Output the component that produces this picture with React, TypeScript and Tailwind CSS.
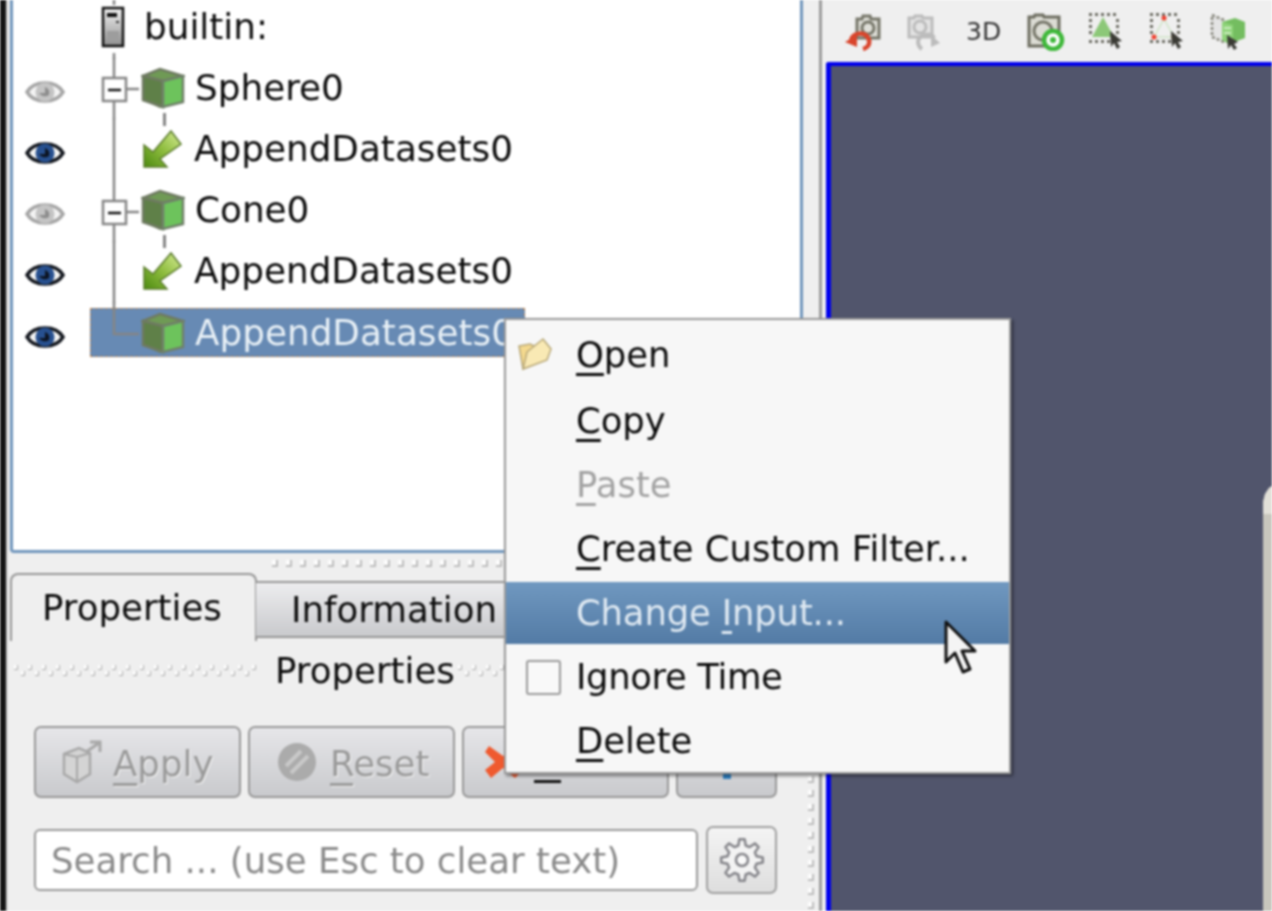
const FONT = "font-['DejaVu_Sans',sans-serif]"

function Eye({ on }: { on: boolean }) {
  const edge = on ? '#14181f' : '#a6a6a6'
  const iris = on ? '#27508f' : '#c4c4c4'
  const pupil = on ? '#0c1422' : '#8d8d8d'
  return (
    <svg width="40" height="28" viewBox="0 0 40 28" className="shrink-0">
      <path d="M2 14 C9 2 31 2 38 14 C31 26 9 26 2 14 Z" fill="#f4f4f4" stroke={edge} strokeWidth="3.5" />
      <circle cx="20" cy="14" r="9.5" fill={iris} />
      <path d="M20 9 v6 h-6 a7 7 0 0 0 10 2 a6 6 0 0 0 -4 -8 Z" fill={pupil} />
    </svg>
  )
}

function Cube() {
  return (
    <svg width="44" height="42" viewBox="0 0 44 42" className="shrink-0">
      <path d="M2 9 L19 2 L42 9 L42 35 L19 41 L2 33 Z" fill="#6c7f58" />
      <path d="M2 9 L19 2 L42 9 L22 14 Z" fill="#6f9a55" stroke="#6f7a62" strokeWidth="2.5" />
      <path d="M2 9 L22 14 L22 40 L2 33 Z" fill="#5f8048" stroke="#6f7a62" strokeWidth="2.5" />
      <path d="M22 14 L42 9 L42 35 L22 40 Z" fill="#6dc35c" stroke="#70806a" strokeWidth="2.5" />
    </svg>
  )
}

function AppendArrow() {
  return (
    <svg width="40" height="40" viewBox="0 0 40 40" className="shrink-0">
      <defs>
        <linearGradient id="arrowFill" x1="1" y1="0" x2="0" y2="1">
          <stop offset="0" stopColor="#d6ec96" />
          <stop offset="0.5" stopColor="#8fbd3f" />
          <stop offset="1" stopColor="#4c8a10" />
        </linearGradient>
      </defs>
      <path d="M1 16 L1 38 L24 38 L17 30 L38 15 L28 2 L10 23 Z" fill="url(#arrowFill)" stroke="#5c7d2e" strokeWidth="1.5" />
    </svg>
  )
}

// server glyph with the stubs of the tree line above and below it
function ServerIcon() {
  return (
    <svg width="24" height="61" viewBox="0 0 24 61" className="shrink-0 overflow-visible">
      <defs>
        <linearGradient id="serverFill" x1="0" y1="0" x2="0" y2="1">
          <stop offset="0" stopColor="#f1f1f1" />
          <stop offset="1" stopColor="#8f8f8f" />
        </linearGradient>
      </defs>
      <path d="M12 0 V9 M12 57 V63" stroke="#858585" strokeWidth="2.5" />
      <rect x="1" y="12" width="20" height="38" fill="url(#serverFill)" stroke="#111" strokeWidth="2.5" />
      <rect x="5" y="17" width="10" height="4" fill="#111" />
      <rect x="14" y="25" width="3" height="2" fill="#333" />
      <rect x="5" y="35" width="12" height="10" fill="#9d9d9d" />
    </svg>
  )
}

// tree gutter of one row, x 90..141 of the picture
function Branch({ kind }: { kind: 'open' | 'child' | 'last' }) {
  const height = 61
  const mid = 32
  return (
    <svg width="51" height={height} viewBox={`0 0 51 ${height}`} className="shrink-0 overflow-visible">
      {kind === 'open' && (
        <>
          <path d={`M24 0 V${height + 1} M36 ${mid} H49`} stroke="#858585" strokeWidth="2.5" />
          <rect x="13" y={mid - 11} width="23" height="23" fill="#fff" stroke="#858585" strokeWidth="2.5" />
          <path d={`M18 ${mid + 1} H31`} stroke="#111" strokeWidth="2.5" />
        </>
      )}
      {kind === 'child' && <path d={`M24 0 V${height + 1}`} stroke="#858585" strokeWidth="2.5" />}
      {kind === 'last' && <path d={`M24 0 V${mid} H49`} stroke="#858585" strokeWidth="2.5" fill="none" />}
    </svg>
  )
}

function TreeRow({ eye, kind, icon, label, selected }: {
  eye?: boolean
  kind?: 'open' | 'child' | 'last'
  icon: 'server' | 'cube' | 'arrow'
  label: string
  selected?: boolean
}) {
  return (
    <div className="flex h-[61.2px] shrink-0">
      <div className="w-[77px] shrink-0 flex items-center pl-[12px] pt-[8px]">
        {eye !== undefined && <Eye on={eye} />}
      </div>
      <div className="grid flex-1">
        {selected && (
          <div className="col-start-1 row-start-1 self-center w-[435px] h-[49px] bg-[#678ab4] border border-dashed border-[#b5804e]" />
        )}
        <div className="col-start-1 row-start-1 flex items-center">
          {kind ? <Branch kind={kind} /> : <div className="w-[12px] shrink-0" />}
          {icon === 'server' && <ServerIcon />}
          {icon === 'cube' && <Cube />}
          {icon === 'arrow' && (
            <div className="relative ml-[2px]">
              <AppendArrow />
              <div className="absolute left-[20px] -top-[16px] w-[2.5px] h-[13px] bg-[#858585]" />
            </div>
          )}
          <span className={`whitespace-nowrap ${icon === 'server' ? 'ml-[18px]' : icon === 'cube' ? 'ml-[10px]' : 'ml-[11px]'} ${selected ? 'text-[#e8f0f6]' : 'text-[#0c0c0c]'}`}>
            {label}
          </span>
        </div>
      </div>
    </div>
  )
}

function Grip({ count, className }: { count: number; className: string }) {
  return (
    <div className={`flex ${className}`}>
      {Array.from({ length: count }, (_, i) => (
        <span key={i} className="w-[6px] h-[7px] shrink-0 bg-[#fdfdfd] border-b-2 border-r-2 border-[#bdbdbd]" />
      ))}
    </div>
  )
}

function TitleGrip({ count, className }: { count: number; className: string }) {
  return (
    <div className={`flex h-[12px] gap-[3px] overflow-hidden ${className}`}>
      {Array.from({ length: count }, (_, i) => (
        <span key={i} className="w-[4px] h-[5px] shrink-0 bg-[#fdfdfd] border-b border-r border-[#adadad] even:mt-[6px]" />
      ))}
    </div>
  )
}

function PanelButton({ width, children, className = '' }: { width: string; children: React.ReactNode; className?: string }) {
  return (
    <div className={`${width} h-[72px] shrink-0 flex items-center rounded-[7px] border-2 border-[#989898] bg-gradient-to-b from-[#e6e6e9] to-[#c9cacd] ${className}`}>
      {children}
    </div>
  )
}

function MenuItem({ label, mnemonic, before = '', disabled, active, icon, className = '' }: {
  label: string
  mnemonic: string
  before?: string
  disabled?: boolean
  active?: boolean
  icon?: React.ReactNode
  className?: string
}) {
  const color = disabled ? 'text-[#a2a2a2]' : active ? 'text-[#dfe9f2]' : 'text-[#0b0b0b]'
  const bg = active ? 'bg-gradient-to-b from-[#7098c0] to-[#537ba5] h-[62px] my-[1px]' : 'h-[64px]'
  return (
    <div className={`flex items-center ${bg}`}>
      <div className="w-[70px] shrink-0 flex items-center">{icon}</div>
      <span className={`whitespace-nowrap ${color} ${className}`}>
        {before}
        {mnemonic && <span className="underline decoration-[3px] underline-offset-[6px] [text-decoration-skip-ink:none]">{mnemonic}</span>}
        {label}
      </span>
    </div>
  )
}

function Dots({ x, y, w, h, gap }: { x: number; y: number; w: number; h: number; gap: number }) {
  const cols = Math.floor(w / gap) + 1
  const rows = Math.floor(h / gap) + 1
  const dots = []
  for (let i = 0; i < cols; i++) {
    dots.push(<rect key={`t${i}`} x={x + i * gap} y={y} width="3" height="3" fill="#6b6b62" />)
    dots.push(<rect key={`b${i}`} x={x + i * gap} y={y + h} width="3" height="3" fill="#6b6b62" />)
  }
  for (let i = 1; i < rows - 1; i++) {
    dots.push(<rect key={`l${i}`} x={x} y={y + i * gap} width="3" height="3" fill="#6b6b62" />)
    dots.push(<rect key={`r${i}`} x={x + w} y={y + i * gap} width="3" height="3" fill="#6b6b62" />)
  }
  return <>{dots}</>
}

function CursorMark() {
  return <path d="M25 22 L26 38 L29 34 L32 40 L35 38 L32 33 L37 32 Z" fill="#3a3a34" />
}

function gearPath(cx: number, cy: number, outer: number, inner: number, teeth: number) {
  const pts: string[] = []
  for (let i = 0; i < teeth; i++) {
    const a = (i / teeth) * Math.PI * 2
    const s = (Math.PI * 2) / teeth
    const at = (r: number, t: number) => `${(cx + r * Math.cos(t)).toFixed(1)} ${(cy + r * Math.sin(t)).toFixed(1)}`
    pts.push(at(inner, a - s * 0.32), at(outer, a - s * 0.16), at(outer, a + s * 0.16), at(inner, a + s * 0.32))
  }
  return `M${pts.join(' L')} Z`
}

function Toolbar() {
  return (
    <div className="h-[62px] shrink-0 flex items-center pl-[20px]">
      {/* reset camera */}
      <svg width="40" height="40" viewBox="0 0 40 40" className="shrink-0">
        <path d="M15 8 H20 L21 5 H28 L29 8 H37 V27 H15 Z" fill="#dfdfd8" stroke="#77776a" strokeWidth="3" />
        <circle cx="26" cy="17" r="6" fill="none" stroke="#77776a" strokeWidth="3" />
        <path d="M9 29 C11 21 24 20 27 29 C28 34 25 37 21 38" fill="none" stroke="#d9452c" strokeWidth="4.5" />
        <path d="M3 31 L15 24 L15 36 Z" fill="#d9452c" />
      </svg>
      {/* redo camera, disabled */}
      <svg width="40" height="40" viewBox="0 0 40 40" className="shrink-0 ml-[22px]">
        <path d="M5 7 H10 L11 5 H18 L19 7 H28 V26 H5 Z" fill="#e4e4e4" stroke="#bcbcbc" strokeWidth="3" />
        <circle cx="16" cy="16" r="6" fill="none" stroke="#bcbcbc" strokeWidth="3" />
        <path d="M14 30 C16 22 28 22 30 27 M18 38 C15 36 14 33 14 30" fill="none" stroke="#bcbcbc" strokeWidth="4" />
        <path d="M36 32 L27 24 L27 36 Z" fill="#bcbcbc" />
      </svg>
      <span className="ml-[22px] w-[40px] text-[25px] text-[#333] leading-none">3D</span>
      {/* zoom to data */}
      <svg width="40" height="40" viewBox="0 0 40 40" className="shrink-0 ml-[20px]">
        <path d="M3 6 H8 L9 4 H17 L18 6 H33 V35 H3 Z" fill="#dcdcd4" stroke="#6d6d60" strokeWidth="3" />
        <circle cx="17" cy="20" r="9" fill="none" stroke="#77776a" strokeWidth="3" />
        <circle cx="27" cy="29" r="9" fill="#fff" stroke="#3fb83a" strokeWidth="4.5" />
        <circle cx="27" cy="29" r="3" fill="#3fb83a" />
      </svg>
      {/* select cells */}
      <svg width="44" height="44" viewBox="0 0 44 44" className="shrink-0 ml-[19px]">
        <Dots x={4} y={4} w={27} h={27} gap={6} />
        <path d="M18 8 L29 28 H7 Z" fill="#8cc878" />
        <CursorMark />
      </svg>
      {/* select points */}
      <svg width="44" height="44" viewBox="0 0 44 44" className="shrink-0 ml-[17px]">
        <Dots x={4} y={4} w={27} h={27} gap={6} />
        <path d="M18 10 L28 28 H8 Z" fill="none" stroke="#cfe4c6" strokeWidth="1.5" />
        <circle cx="18" cy="9" r="2.5" fill="#f04030" />
        <circle cx="8" cy="28" r="2.5" fill="#f04030" />
        <circle cx="28" cy="28" r="2.5" fill="#f04030" />
        <CursorMark />
      </svg>
      {/* interactive select */}
      <svg width="44" height="44" viewBox="0 0 44 44" className="shrink-0 ml-[17px]">
        <path d="M5 6 L17 11 V33 L5 28 Z" fill="#e4e4e4" stroke="#85857a" strokeWidth="2.5" strokeDasharray="3 2" />
        <path d="M15 13 L28 9 L38 13 V29 L22 35 L15 31 Z" fill="#74bd60" />
        <path d="M15 13 L26 16 V34 L15 31 Z" fill="#8fd47a" />
        <path d="M17 19 H24 M17 24 H24" stroke="#dff2d6" strokeWidth="1.5" />
        <path d="M20 26 L21 40 L24 36 L27 41 L30 39 L27 35 L31 33 Z" fill="#3a3a34" />
      </svg>
    </div>
  )
}

export default function App() {
  return (
    <div className={`relative flex w-[1272px] h-[911px] overflow-hidden bg-[#efefef] text-[35.6px] leading-none blur-[0.8px] ${FONT}`}>
      <div className="w-[6px] shrink-0 bg-[#141414]" />
      <div className="w-[2px] shrink-0 bg-[#d2d2d2]" />

      {/* left dock */}
      <div className="w-[811px] shrink-0 flex flex-col pl-[2px]">
        <div className="w-[793px] h-[553px] shrink-0 overflow-hidden flex flex-col bg-white border-x-[3px] border-b-[3px] border-[#7196bc] rounded-b-[4px] text-[35.8px]">
          <div className="flex flex-col -mt-[4px]">
            <TreeRow icon="server" label="builtin:" />
            <TreeRow eye={false} kind="open" icon="cube" label="Sphere0" />
            <TreeRow eye kind="child" icon="arrow" label="AppendDatasets0" />
            <TreeRow eye={false} kind="open" icon="cube" label="Cone0" />
            <TreeRow eye kind="child" icon="arrow" label="AppendDatasets0" />
            <TreeRow eye kind="last" icon="cube" label="AppendDatasets0" selected />
          </div>
        </div>

        <div className="flex flex-1 min-h-0">
          <div className="w-[793px] shrink-0 flex flex-col">
            <Grip count={17} className="h-[20px] items-center pl-[262px] gap-[8px]" />

            <div className="flex h-[68px] items-end shrink-0">
              <div className="w-[247px] h-[68px] shrink-0 pt-[15px] pl-[30px] rounded-t-[8px] border-t-2 border-x-2 border-[#969696] border-b-0 bg-[#efefef] text-[#0c0c0c]">
                Properties
              </div>
              <div className="w-[300px] h-[57px] mb-[3px] -ml-[1px] shrink-0 pt-[9px] pl-[35px] rounded-br-[8px] border-y-2 border-r-2 border-[#969696] bg-gradient-to-b from-[#ededef] to-[#c9cacd] text-[#0c0c0c]">
                Information
              </div>
            </div>

            <div className="h-[60px] shrink-0 flex items-center pl-[4px]">
              <TitleGrip count={35} className="w-[246px]" />
              <span className="ml-[15px] text-[#0c0c0c] whitespace-nowrap">Properties</span>
              <TitleGrip count={40} className="ml-[3px] w-[280px]" />
            </div>

            <div className="flex gap-[7px] pl-[24px] mt-[25px] shrink-0">
              <PanelButton width="w-[207px]" className="pl-[26px] text-[#9a9a9a]">
                <svg width="40" height="44" viewBox="0 0 40 44" className="shrink-0">
                  <path d="M2 14 L17 8 L28 13 V34 L15 42 L2 34 Z" fill="#d4d4d4" stroke="#a8a8a8" strokeWidth="2.5" />
                  <path d="M15 17 V42 M2 14 L15 17 L28 13" stroke="#a8a8a8" strokeWidth="2" fill="none" />
                  <path d="M24 12 L37 3 M28 2 H38 V12" stroke="#a8a8a8" strokeWidth="3" fill="none" />
                </svg>
                <span className="ml-[11px] mt-[3px] [text-shadow:1px_1px_0_#f4f4f4]">
                  <span className="underline decoration-[3px] underline-offset-[7px]">A</span>pply
                </span>
              </PanelButton>
              <PanelButton width="w-[207px]" className="pl-[27px] text-[#9a9a9a]">
                <svg width="40" height="40" viewBox="0 0 40 40" className="shrink-0">
                  <circle cx="20" cy="20" r="19" fill="#ababab" />
                  <path d="M9 24 L24 9 M14 31 L31 14" stroke="#c9c9c9" strokeWidth="4" />
                </svg>
                <span className="ml-[13px] mt-[3px] [text-shadow:1px_1px_0_#f4f4f4]">
                  <span className="underline decoration-[3px] underline-offset-[7px]">R</span>eset
                </span>
              </PanelButton>
              <PanelButton width="w-[207px]" className="pl-[19px]">
                <svg width="40" height="40" viewBox="0 0 40 40" className="shrink-0">
                  <path d="M6 4 L20 14 L34 4 L38 12 L28 20 L38 30 L32 36 L20 26 L8 36 L2 28 L12 20 L2 10 Z" fill="#ef5a2f" />
                </svg>
                {/* the label sits under the menu, only its mnemonic underline shows */}
                <span className="ml-[11px] mt-[39px] w-[27px] h-[3px] bg-[#111]" />
              </PanelButton>
              <PanelButton width="w-[101px]" className="justify-center h-[70px] pt-[28px]">
                <span className="w-[8px] h-[6px] bg-[#2f7fc0]" />
              </PanelButton>
            </div>

            <div className="flex items-center gap-[8px] pl-[24px] mt-[28px] shrink-0">
              <input
                readOnly
                placeholder="Search ... (use Esc to clear text)"
                className="w-[664px] h-[62px] px-[15px] rounded-[6px] border-2 border-[#989898] bg-white outline-none text-[#333] placeholder:text-[#8a8a8a]"
              />
              <div className="w-[71px] h-[68px] flex items-center justify-center rounded-[7px] border-2 border-[#a0a0a0] bg-gradient-to-b from-[#f4f4f4] to-[#dedede]">
                <svg width="46" height="46" viewBox="0 0 46 46">
                  <path d={gearPath(23, 23, 21, 15, 8)} fill="#f3f3f3" stroke="#85858a" strokeWidth="2.5" strokeLinejoin="round" />
                  <circle cx="23" cy="23" r="6" fill="#fafafa" stroke="#85858a" strokeWidth="2.5" />
                </svg>
              </div>
            </div>
          </div>

          {/* vertical dock grip */}
          <Grip count={24} className="flex-col w-[16px] pt-[27px] pl-[5px] gap-[7px] shrink-0" />
        </div>
      </div>

      {/* right side */}
      <div className="w-[3px] shrink-0 bg-[#9c9c9c]" />
      <div className="flex-1 flex flex-col min-w-0">
        <Toolbar />
        <div className="relative flex-1 ml-[4px] border-l-[5px] border-t-[4px] border-[#0000ee] rounded-tl-[3px] bg-[#51556c]">
          {/* edge of the rendered geometry */}
          <svg width="9" height="425" viewBox="0 0 9 425" className="absolute right-0 bottom-0">
            <path d="M0 16 L2 8 L6 2 L9 0 V425 H0 Z" fill="#c8c6bd" />
            <path d="M0 16 L2 8 L6 2 L9 0 V28 H0 Z" fill="#e2e0d8" />
          </svg>
        </div>
      </div>

      {/* context menu */}
      <div className="absolute left-[504px] top-[318px] w-[507px] h-[456px] pt-[5px] text-[35.4px] bg-[#f7f7f7] border-2 border-[#9a9a9a] shadow-[2px_2px_3px_rgba(0,0,0,0.45)]">
        <MenuItem
          mnemonic="O"
          label="pen"
          className="mb-[4px]"
          icon={
            <svg width="36" height="36" viewBox="0 0 36 36" className="ml-[11px] -mt-[6px]">
              <path d="M2 10 L13 8 L17 10 L27 7 L28 24 L6 33 Z" fill="#f4d98e" stroke="#b8a878" strokeWidth="1.5" />
              <path d="M10 16 L26 3 L34 13 L30 24 L6 33 Z" fill="#f9e9b4" stroke="#b8a878" strokeWidth="1.5" />
            </svg>
          }
        />
        <MenuItem mnemonic="C" label="opy" />
        <MenuItem mnemonic="P" label="aste" disabled />
        <MenuItem mnemonic="C" label="reate Custom Filter..." />
        <MenuItem before="Change " mnemonic="I" label="nput..." active className="tracking-[-0.15px]" />
        <MenuItem
          mnemonic=""
          label=""
          before="Ignore Time"
          className="tracking-[-0.35px]"
          icon={<span className="w-[35px] h-[35px] ml-[20px] rounded-[3px] border-2 border-[#9a9a9a] bg-[#f9f9f9]" />}
        />
        <MenuItem mnemonic="D" label="elete" />
      </div>

      {/* mouse pointer */}
      <svg width="36" height="56" viewBox="0 0 36 56" className="absolute left-[943px] top-[620px]">
        <path d="M3 2 L3 42 L12 33 L20 52 L27 49 L19 31 L32 31 Z" fill="#f4f4f4" stroke="#111" strokeWidth="3" strokeLinejoin="round" />
      </svg>
    </div>
  )
}
